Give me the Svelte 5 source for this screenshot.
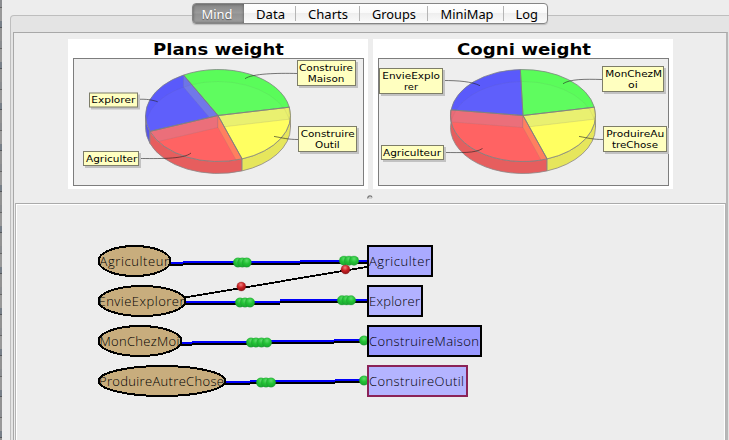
<script>
  const tabs = [
    { name: 'Mind', width: 51, length: 31, dx: -1.5 },
    { name: 'Data', width: 52, length: 29, dx: 0 },
    { name: 'Charts', width: 64, length: 40, dx: 0 },
    { name: 'Groups', width: 68, length: 44, dx: 0 },
    { name: 'MiniMap', width: 76, length: 53, dx: 0.5 },
    { name: 'Log', width: 43, length: 22.5, dx: 1.5 }
  ];

  const cx = 150, cy = 76.5, rx = 72.5, ry = 46, depth = 12;
  const pt = (deg, dy = 0) => {
    const a = (deg * Math.PI) / 180;
    return `${(cx + rx * Math.cos(a)).toFixed(2)},${(cy + dy + ry * Math.sin(a)).toFixed(2)}`;
  };
  const slice = (a, b) =>
    `M${cx},${cy}L${pt(a)}A${rx},${ry} 0 ${b - a > 180 ? 1 : 0} 1 ${pt(b)}Z`;
  const side = (a, b) =>
    `M${pt(a)}A${rx},${ry} 0 0 1 ${pt(b)}L${pt(b, depth)}A${rx},${ry} 0 0 0 ${pt(a, depth)}Z`;
  const wall = (a) => `M${cx},${cy}L${pt(a)}L${pt(a, depth)}L${cx},${cy + depth}Z`;

  const makeChart = (id, title, titleX, titleLen, blueRed, blueGreen, sides, labels) => ({
    id, title, titleX, titleLen, sides, labels,
    slices: [
      { a: blueGreen, b: -10.4, fill: '#5afc5a' },
      { a: -10.4, b: 70.6, fill: '#ffff5c' },
      { a: 70.6, b: blueRed, fill: '#ff5e5e' },
      { a: blueRed, b: blueGreen + 360, fill: '#5a5afb' }
    ],
    walls: [
      ...(blueGreen < -100 ? [{ a: blueGreen, fill: '#6d74e8' }] : []),
      { a: blueRed, fill: '#eb6b76' },
      { a: -10.4, fill: '#e9f06c' },
      { a: 70.6, fill: '#ff7b5a' }
    ]
  });

  const charts = [
    makeChart('plans', 'Plans weight', 85, 131, 159.8, -118.4,
      [
        { a: 159.8, b: 180, fill: '#5656e6' },
        { a: 70.6, b: 159.8, fill: '#e65e5e' },
        { a: 0, b: 70.6, fill: '#e6e65c' }
      ],
      [
        { box: [21, 53.5, 49, 15], lines: [['Explorer', 23.3, 64, 44]], lead: 'M70,60.3C79,60 83,60.7 89.7,62.7' },
        { box: [15, 112, 56, 15], lines: [['Agriculter', 18, 123, 51.3]], lead: 'M71,119.5C88,119.5 116,120.5 123,114' },
        { box: [229, 21, 59, 26], lines: [['Construire', 231, 32, 54], ['Maison', 239.7, 43, 36.7]], lead: 'M229,34.5C210,34 184,34.5 177,39.7' },
        { box: [230, 87, 59, 26], lines: [['Construire', 232.7, 98, 54], ['Outil', 247, 109, 24.7]], lead: 'M230,100.5C220,100.5 215,99 206,97.4' }
      ]),
    makeChart('cogni', 'Cogni weight', 84, 134, 187, -92.1,
      [
        { a: 70.6, b: 187, fill: '#e65e5e' },
        { a: 0, b: 70.6, fill: '#e6e65c' }
      ],
      [
        { box: [6, 29, 64, 26], lines: [['EnvieExplo', 9.3, 40, 57.7], ['rer', 31, 51, 14]], lead: 'M70,41.5C85,41.5 99,42.5 107,46.7' },
        { box: [8, 106, 63, 15], lines: [['Agriculteur', 10, 117, 58]], lead: 'M71,113.5C88,113.5 102,114.5 109.5,109.5' },
        { box: [229, 27, 62, 26], lines: [['MonChezM', 232.3, 38, 56.7], ['oi', 255, 49, 9.7]], lead: 'M229,40.5C212,40 197,40 190,44.7' },
        { box: [230, 87, 64, 26], lines: [['ProduireAu', 233.3, 98, 58], ['treChose', 239, 109, 46]], lead: 'M230,100.5C220,100.5 215,99 206,97.4' }
      ])
  ];

  const cognitons = [
    { name: 'Agriculteur', right: 171, y: 261, x: 99.5, length: 69.5 },
    { name: 'EnvieExplorer', right: 186, y: 301, x: 98.5, length: 86 },
    { name: 'MonChezMoi', right: 182, y: 341, x: 99.5, length: 80 },
    { name: 'ProduireAutreChose', right: 226, y: 381, x: 99, length: 125 }
  ];
  const plans = [
    { name: 'Agriculter', y: 246, w: 64, fill: '#aaaaff', stroke: '#000', length: 61 },
    { name: 'Explorer', y: 286, w: 54, fill: '#b2b2ff', stroke: '#000', length: 51 },
    { name: 'ConstruireMaison', y: 326, w: 113, fill: '#9999ff', stroke: '#000', length: 110 },
    { name: 'ConstruireOutil', y: 366, w: 99, fill: '#b4b4ff', stroke: '#8b2357', length: 95 }
  ];
  // each link drops to the plan in whole-pixel steps: [x from, x to, top]
  const links = [
    [[170, 183, 262], [183, 300, 261], [300, 368, 260]],
    [[186, 280, 301.5], [280, 368, 299.5]],
    [[181, 192, 342], [192, 260, 341], [260, 334, 340], [334, 368, 339]],
    [[225, 250, 381], [250, 335, 380], [335, 368, 379]]
  ].map((l) => l.map(([a, b, y]) => [a, b, Math.floor(y)]));
  const beads = [
    [238, 262.5], [242.3, 262.5], [246.7, 262.5], [344, 260.7], [349, 260.7], [354, 260.7],
    [240, 302.5], [245, 302.5], [250, 302.5], [342, 300.3], [346.5, 300.3], [351, 300.3],
    [251, 342.5], [256, 342.5], [261.5, 342.5], [267, 342.5], [364, 340.5],
    [261, 382.5], [266, 382.5], [271, 382.5], [364, 380.5]
  ];
  const redBeads = [[241.3, 286.5], [345.5, 269.5]];
</script>

<div class="window">
  <div class="edge"></div>
  <div class="pane">
    <nav class="tabs">
      {#each tabs as tab, i}
        <button class="tab" class:active={i === 0} style="width:{tab.width}px">
          <svg width={tab.length} height="18">
            <text x={tab.dx} y="13.5" textLength={tab.length} lengthAdjust="spacingAndGlyphs">{tab.name}</text>
          </svg>
        </button>
      {/each}
    </nav>
    <div class="content">
      <div class="charts">
        {#each charts as chart}
          <svg class="chart" width="300" height="150">
            <defs>
              <clipPath id="{chart.id}-top"><ellipse {cx} {cy} {rx} {ry} /></clipPath>
            </defs>
            <rect width="300" height="150" fill="#fff" />
            <text class="title" x={chart.titleX} y="15.7" textLength={chart.titleLen} lengthAdjust="spacingAndGlyphs">{chart.title}</text>
            <rect x="5.5" y="19.5" width="290" height="127" fill="#eee" stroke="#7d7d7d" />
            {#each chart.sides as s}
              <path d={side(s.a, s.b)} fill={s.fill} stroke="#8c8787" stroke-width=".8" />
            {/each}
            <path d={side(-10.4, 0)} fill="#e6e65c" stroke="#8c8787" stroke-width=".5" />
            {#each chart.slices as s}
              <path d={slice(s.a, s.b)} fill={s.fill} />
            {/each}
            <g clip-path="url(#{chart.id}-top)">
              {#each chart.walls as w}
                <path d={wall(w.a)} fill={w.fill} stroke="#777" stroke-opacity=".25" stroke-width=".7" />
              {/each}
              <ellipse {cx} cy={cy + depth} {rx} {ry} fill="#fff" fill-opacity=".03" stroke="#666" stroke-opacity=".12" stroke-width=".8" />
            </g>
            {#each chart.slices as s}
              <path d={slice(s.a, s.b)} fill="none" stroke="#7d8080" stroke-width=".9" stroke-opacity=".85" />
            {/each}
            {#each chart.labels as label}
              {@const [x, y, w, h] = label.box}
              <path d={label.lead} fill="none" stroke="#222" stroke-width=".6" />
              <rect x={x + 2} y={y + 2} width={w} height={h} fill="#c2c2c2" />
              <rect x={x + 0.5} y={y + 0.5} width={w - 1} height={h - 1} fill="#ffffc0" stroke="#7d7d68" />
              {#each label.lines as [text, tx, ty, len]}
                <text class="label" x={tx} y={ty} textLength={len} lengthAdjust="spacingAndGlyphs">{text}</text>
              {/each}
            {/each}
          </svg>
        {/each}
      </div>
      <div class="divider">
        <svg width="6" height="5"><path d="M.7 3.5Q1 .8 3 .8Q4.7 .8 5 2.5" fill="none" stroke="#777" stroke-width="1.3" /><path d="M2 3h3" stroke="#bbb" /></svg>
      </div>
      <div class="graph">
        <svg width="709" height="235" viewBox="17 205 709 235">
          <defs>
            <radialGradient id="green" cx=".5" cy=".3" r=".7">
              <stop offset="0" stop-color="#5ddb6b" /><stop offset=".5" stop-color="#22c234" /><stop offset="1" stop-color="#1ba331" />
            </radialGradient>
            <radialGradient id="red" cx=".45" cy=".3" r=".7">
              <stop offset="0" stop-color="#f08080" /><stop offset=".5" stop-color="#c91f22" /><stop offset="1" stop-color="#8f1518" />
            </radialGradient>
          </defs>
          <g shape-rendering="crispEdges" stroke-width="2">
            {#each links as link}
              {#each link as [a, b, y]}
                <rect x={a} y={y + 2} width={b - a} height="2" fill="#000" />
              {/each}
              {#each link as [a, b, y]}
                <rect x={a} {y} width={b - a} height="2" fill="#0000fa" />
              {/each}
            {/each}
            <line x1="185" y1="297.5" x2="368" y2="266.7" stroke="#000" stroke-width="1.8" />
            {#each cognitons as c}
              <ellipse cx={(98 + c.right) / 2} cy={c.y} rx={(c.right - 98) / 2 - 0.5} ry="15" fill="#c8ad7d" stroke="#000" />
            {/each}
          </g>
          {#each beads as [x, y]}
            <circle cx={x} cy={y} r="4.8" fill="url(#green)" stroke="#238a32" stroke-opacity=".4" stroke-width=".6" />
          {/each}
          {#each redBeads as [x, y]}
            <circle cx={x} cy={y} r="4.5" fill="url(#red)" stroke="#7a2020" stroke-opacity=".5" stroke-width=".6" />
          {/each}
          {#each cognitons as c}
            <text class="node" x={c.x} y={c.y + 5} textLength={c.length} lengthAdjust="spacing">{c.name}</text>
          {/each}
          {#each plans as p}
            <rect x="368" y={p.y} width={p.w} height="30" fill={p.fill} stroke={p.stroke} stroke-width="2" />
            <text class="node" x="369" y={p.y + 20} textLength={p.length} lengthAdjust="spacing">{p.name}</text>
          {/each}
        </svg>
      </div>
    </div>
  </div>
</div>

<style>
  :global(body) { background: #ededed; overflow: hidden; }
  .window { display: flex; width: 729px; height: 440px; background: #ededed; overflow: hidden; }
  .edge {
    flex: none;
    width: 2px;
    background: repeating-linear-gradient(#8b8d90 0 7px, #666 7px 8px, #999 8px 21px, #777f88 21px 27px, #55585c 27px 28px, #929292 28px 41px);
  }
  .pane {
    box-sizing: border-box;
    flex: 1;
    margin: 15px -4px 0 8px;
    border: 1px solid #bebebe;
    border-bottom: 0;
    border-radius: 4px 0 0 0;
    background: #e4e4e4;
    height: 430px;
    padding-left: 2px;
  }
  .tabs {
    position: relative;
    display: flex;
    box-sizing: border-box;
    width: 356px;
    height: 21px;
    margin: -13px 0 0 179px;
    border: 1px solid #858585;
    border-radius: 4px;
    background: linear-gradient(#fff, #fafafa 45%, #eee 50%, #fbfbfb);
    box-shadow: 0 1px 1px #bbb;
    overflow: hidden;
  }
  .tab {
    position: relative;
    display: flex;
    align-items: center;
    justify-content: center;
    flex: none;
    box-sizing: border-box;
    height: 19px;
    padding: 0;
    border: 0;
    background: none;
  }
  .tab svg { overflow: visible; display: block; }
  .tab text { font: 13px "Noto Sans", sans-serif; fill: #000; }
  .tab:not(:last-child):not(.active)::after {
    content: "";
    position: absolute;
    right: 0;
    top: 2px;
    width: 1px;
    height: 15px;
    background: #b5b5b5;
  }
  .active { background: linear-gradient(#858585, #9b9b9b 45%, #929292 55%, #a0a0a0); box-shadow: inset 0 0 3px #555; }
  .active text { fill: #fff; text-shadow: 0 1px 1px #555; }
  .content {
    box-sizing: border-box;
    width: 715px;
    height: 408px;
    margin-top: 8px;
    border: 1px solid #a8a8a8;
    border-bottom: 0;
    border-right: 2px solid #b8b8b8;
    background: #ededed;
  }
  .charts { display: flex; gap: 5px; padding: 6px 0 0 54px; }
  .chart { display: block; flex: none; }
  .title { font: bold 15px "DejaVu Sans", sans-serif; }
  .label { font: 9.5px "DejaVu Sans", sans-serif; }
  .divider { display: flex; height: 14px; padding: 6px 0 0 353px; box-sizing: border-box; }
  .graph {
    box-sizing: border-box;
    width: 711px;
    height: 237px;
    margin-left: 1px;
    border-top: 1px solid #aaa;
    border-left: 1px solid #b4b4b4;
    border-right: 1px solid #b4b4b4;
    box-shadow: inset 1px 1px #fff, inset -1px 0 #fff;
  }
  .graph svg { display: block; margin-top: 1px; margin-left: 1px; }
  .node { font: 300 13px "Open Sans", "Noto Sans", sans-serif; fill: #000; }
</style>
